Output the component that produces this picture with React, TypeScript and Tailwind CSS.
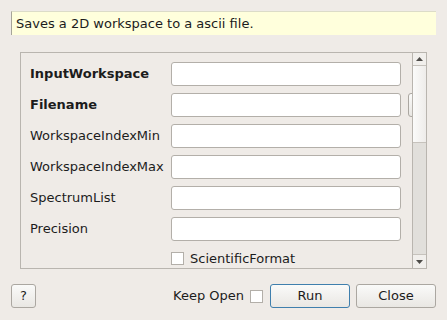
const labels: { name: string; bold?: boolean; browse?: boolean }[] = [
  { name: 'InputWorkspace', bold: true },
  { name: 'Filename', bold: true, browse: true },
  { name: 'WorkspaceIndexMin' },
  { name: 'WorkspaceIndexMax' },
  { name: 'SpectrumList' },
  { name: 'Precision' },
];

function Btn({ children, w, primary }: { children: React.ReactNode; w: string; primary?: boolean }) {
  return (
    <div
      className={`${w} flex h-[24px] items-center justify-center rounded-[3px] border bg-gradient-to-b from-[#fafaf9] to-[#e9e7e3] text-[13px] text-[#1c1c1c] ${
        primary ? 'border-[#3f7fad] from-[#f4f7f9] to-[#dfe6ea]' : 'border-[#aba7a1]'
      }`}
    >
      {children}
    </div>
  );
}

export default function App() {
  return (
    <div
      className="flex h-[320px] w-[447px] flex-col bg-[#efebe7] text-[13px] text-[#1c1c1c]"
      style={{ fontFamily: '"DejaVu Sans", sans-serif' }}
    >
      {/* Description */}
      <div className="mx-[11px] mt-[11px] flex h-[24px] items-center border-l border-t border-l-[#a6a49a] border-t-[#dcdcc8] bg-[#ffffdc] pl-[4px]">
        Saves a 2D workspace to a ascii file.
      </div>

      {/* Properties scroll area */}
      <div className="ml-[20px] mt-[17px] flex h-[217px] w-[407px] border border-[#b9b5af]">
        <div className="flex flex-1 flex-col gap-[7px] overflow-hidden pl-[9px] pt-[9px]">
          {labels.map((l) => (
            <div key={l.name} className="flex h-[24px] items-center">
              <div className={`w-[141px] shrink-0 ${l.bold ? 'font-bold' : ''}`}>{l.name}</div>
              <div className="h-[24px] w-[230px] shrink-0 rounded-[3px] border border-[#b3afa9] bg-white" />
              {l.browse && (
                <div className="ml-[7px] h-[24px] w-[30px] shrink-0 rounded-[3px] border border-[#aba7a1] bg-gradient-to-b from-[#fafaf9] to-[#e9e7e3]" />
              )}
            </div>
          ))}
          <div className="mt-[4px] flex h-[13px] items-center pl-[141px]">
            <div className="h-[13px] w-[13px] shrink-0 border border-[#b3afa9] bg-white" />
            <span className="ml-[6px]">ScientificFormat</span>
          </div>
        </div>

        {/* Scrollbar */}
        <div className="flex w-[14px] flex-col border-l border-[#b9b5af]">
          <div className="flex h-[13px] items-center justify-center border-b border-[#c6c2bc] bg-[#f1efec]">
            <svg width="7" height="4" viewBox="0 0 7 4">
              <path d="M0 4 L3.5 0 L7 4 Z" fill="#4d4b48" />
            </svg>
          </div>
          <div className="h-[77px] border-b border-[#c6c2bc] bg-gradient-to-r from-[#fbfbfa] to-[#eeecea]" />
          <div className="flex-1 bg-[#e1dfdb]" />
          <div className="flex h-[14px] items-center justify-center border-t border-[#c6c2bc] bg-[#f1efec]">
            <svg width="7" height="4" viewBox="0 0 7 4">
              <path d="M0 0 L7 0 L3.5 4 Z" fill="#4d4b48" />
            </svg>
          </div>
        </div>
      </div>

      {/* Buttons */}
      <div className="mt-[15px] flex items-center px-[11px]">
        <Btn w="w-[25px]">?</Btn>
        <div className="flex-1" />
        <span>Keep Open</span>
        <div className="ml-[6px] mr-[7px] h-[13px] w-[13px] border border-[#b3afa9] bg-white" />
        <Btn w="w-[80px]" primary>
          Run
        </Btn>
        <div className="w-[6px]" />
        <Btn w="w-[80px]">Close</Btn>
      </div>
    </div>
  );
}
